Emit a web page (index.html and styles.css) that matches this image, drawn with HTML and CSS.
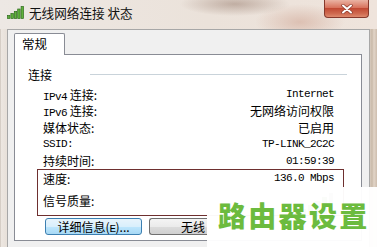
FILE: index.html
```html
<!DOCTYPE html>
<html>
<head>
<meta charset="utf-8">
<link rel="stylesheet" href="styles.css">
</head>
<body>
<div class="window">
  <div class="titlebar">
    <svg class="sig" width="18" height="13" viewBox="0 0 18 13">
      <rect x="0.5" y="9.5" width="2.4" height="3" fill="#5fb23a" stroke="#2f6b1e" stroke-width="0.7"/>
      <rect x="3.9" y="7.5" width="2.4" height="5" fill="#5fb23a" stroke="#2f6b1e" stroke-width="0.7"/>
      <rect x="7.3" y="5.5" width="2.4" height="7" fill="#5fb23a" stroke="#2f6b1e" stroke-width="0.7"/>
      <rect x="10.7" y="3" width="2.4" height="9.5" fill="#5fb23a" stroke="#2f6b1e" stroke-width="0.7"/>
      <rect x="14.1" y="0.5" width="2.4" height="12" fill="#5fb23a" stroke="#2f6b1e" stroke-width="0.7"/>
    </svg>
    <span class="title">无线网络连接 状态</span>
    <div class="close">
      <svg width="14" height="10" viewBox="0 0 14 10">
        <path d="M3 1.5 L11 8.5 M11 1.5 L3 8.5" stroke="#8a3a2c" stroke-width="3.4" stroke-linecap="round"/>
        <path d="M3 1.5 L11 8.5 M11 1.5 L3 8.5" stroke="#ffffff" stroke-width="2" stroke-linecap="round"/>
      </svg>
    </div>
  </div>
  <div class="client">
    <div class="tabs"><div class="tab">常规</div></div>
    <div class="panel">
      <div class="section"><span>连接</span><i class="rule"></i></div>
      <div class="rows">
        <div class="row"><span><span class="lat">IPv4</span> 连接:</span><span class="lat">Internet</span></div>
        <div class="row"><span><span class="lat">IPv6</span> 连接:</span><span>无网络访问权限</span></div>
        <div class="row"><span>媒体状态:</span><span>已启用</span></div>
        <div class="row"><span class="lat">SSID:</span><span class="lat">TP-LINK_2C2C</span></div>
        <div class="row"><span>持续时间:</span><span class="lat">01:59:39</span></div>
        <div class="boxed">
          <div class="row"><span>速度:</span><span class="lat">136.0 Mbps</span></div>
          <div class="row sigrow"><span>信号质量:</span>
            <svg class="bars" width="34" height="22" viewBox="0 0 34 22">
              <rect x="1" y="17" width="5" height="5" fill="#6aa84f"/>
              <rect x="8" y="13" width="5" height="9" fill="#6aa84f"/>
              <rect x="15" y="9" width="5" height="13" fill="#6aa84f"/>
              <rect x="22" y="5" width="5" height="17" fill="#6aa84f"/>
              <rect x="29" y="1" width="4" height="21" fill="#9a9a9a"/>
            </svg>
          </div>
        </div>
      </div>
      <div class="buttons">
        <div class="btn btn-hot">详细信息(<span class="lat">E</span>)...</div>
        <div class="btn btn-cut">无线</div>
      </div>
    </div>
  </div>
  <div class="watermark">路由器设置</div>
</div>
</body>
</html>
```
FILE: styles.css
```css
html, body {
  margin: 0;
  padding: 0;
  width: 377px;
  height: 247px;
  overflow: hidden;
}
body {
  font-family: "Noto Sans CJK SC", sans-serif;
  font-size: 12px;
  color: #000;
}
.window {
  position: relative;
  width: 377px;
  height: 247px;
  display: flex;
  flex-direction: column;
  background:
    linear-gradient(90deg, #d6cec6 0, #d6cec6 1px, #ede7e1 1px, #e8e1da 6px, #ded3c8 369px, #c9b9a8 372px, #e2d5c8 374px, #cdbdae 377px);
}
.titlebar {
  height: 29px;
  flex: none;
  display: flex;
  align-items: flex-start;
  background:
    radial-gradient(ellipse 55px 12px at 235px 4px, rgba(140, 110, 95, 0.45), rgba(140, 110, 95, 0)),
    radial-gradient(ellipse 45px 18px at 300px 22px, rgba(200, 150, 130, 0.45), rgba(200, 150, 130, 0)),
    linear-gradient(90deg, #ede8e4, #ebe2da 55%, #efe4dc);
}
.sig {
  margin: 6px 0 0 7px;
  flex: none;
}
.title {
  margin: 4px 0 0 4px;
  line-height: 17px;
  font-size: 12.6px;
  color: #111;
}
.close {
  margin-left: auto;
  margin-right: 8px;
  width: 43px;
  height: 17px;
  border: 1px solid #86392c;
  border-top: none;
  border-radius: 0 0 4px 4px;
  background: linear-gradient(#eab3a3, #d8735d 45%, #c14a34 50%, #cf6a50 80%, #de8a6e);
  display: flex;
  align-items: center;
  justify-content: center;
}
.client {
  flex: 1;
  margin: 0 7px 0 7px;
  border: 1px solid #a7a7a7;
  border-bottom: none;
  background: #f0f0f0;
  padding: 3px 7px 0 6px;
}
.tabs {
  display: flex;
  height: 21px;
}
.tab {
  position: relative;
  z-index: 1;
  box-sizing: border-box;
  width: 51px;
  height: 22px;
  border: 1px solid #898c95;
  border-bottom: none;
  border-radius: 2px 2px 0 0;
  background: #fff;
  padding-left: 7px;
  line-height: 20px;
  font-size: 12.5px;
}
.panel {
  background: #fff;
  border: 1px solid #898c95;
  padding: 11px 0 5px 0;
}
.section {
  display: flex;
  align-items: center;
  height: 16px;
  padding-left: 13px;
}
.rule {
  flex: 1;
  height: 1px;
  background: #c9d3da;
  margin: 1px 14px 0 38px;
}
.rows {
  margin: 4px 18px 0 23px;
}
.row {
  display: flex;
  justify-content: space-between;
  align-items: center;
  height: 16.6px;
  padding: 0 9px 0 5px;
  white-space: nowrap;
}
.lat {
  font-family: "Liberation Mono", monospace;
  font-size: 11px;
  letter-spacing: -0.6px;
}
.boxed {
  border: 1px solid #6e2f2f;
  margin: 0 -1px;
}
.sigrow {
  height: 28px;
}
.bars {
  margin-top: 4px;
}
.buttons {
  display: flex;
  gap: 7px;
  padding-left: 30px;
  margin-top: 2px;
}
.btn {
  box-sizing: border-box;
  width: 97px;
  height: 17px;
  border: 1px solid #707070;
  border-radius: 3px;
  background: linear-gradient(#f4f4f4, #ebebeb 50%, #dcdcdc 51%, #d0d0d0);
  line-height: 15px;
  text-align: center;
  white-space: nowrap;
}
.btn-cut {
  width: 58px;
  border-right: none;
  border-radius: 3px 0 0 3px;
  text-align: left;
  padding-left: 31px;
}
.btn-hot {
  border-color: #3c7fb1;
  background: linear-gradient(#e8f4fc, #d9effc 50%, #bee6fd 51%, #a7d9f5);
}
.watermark {
  position: absolute;
  left: 207px;
  top: 187px;
  right: 0;
  bottom: 0;
  background: rgba(255, 255, 255, 0.97);
  padding: 13px 0 0 11px;
  font-family: "Noto Sans CJK SC", sans-serif;
  font-weight: 900;
  font-size: 28px;
  line-height: 30px;
  letter-spacing: 2.3px;
  color: #6cbb3e;
  white-space: nowrap;
}
```
